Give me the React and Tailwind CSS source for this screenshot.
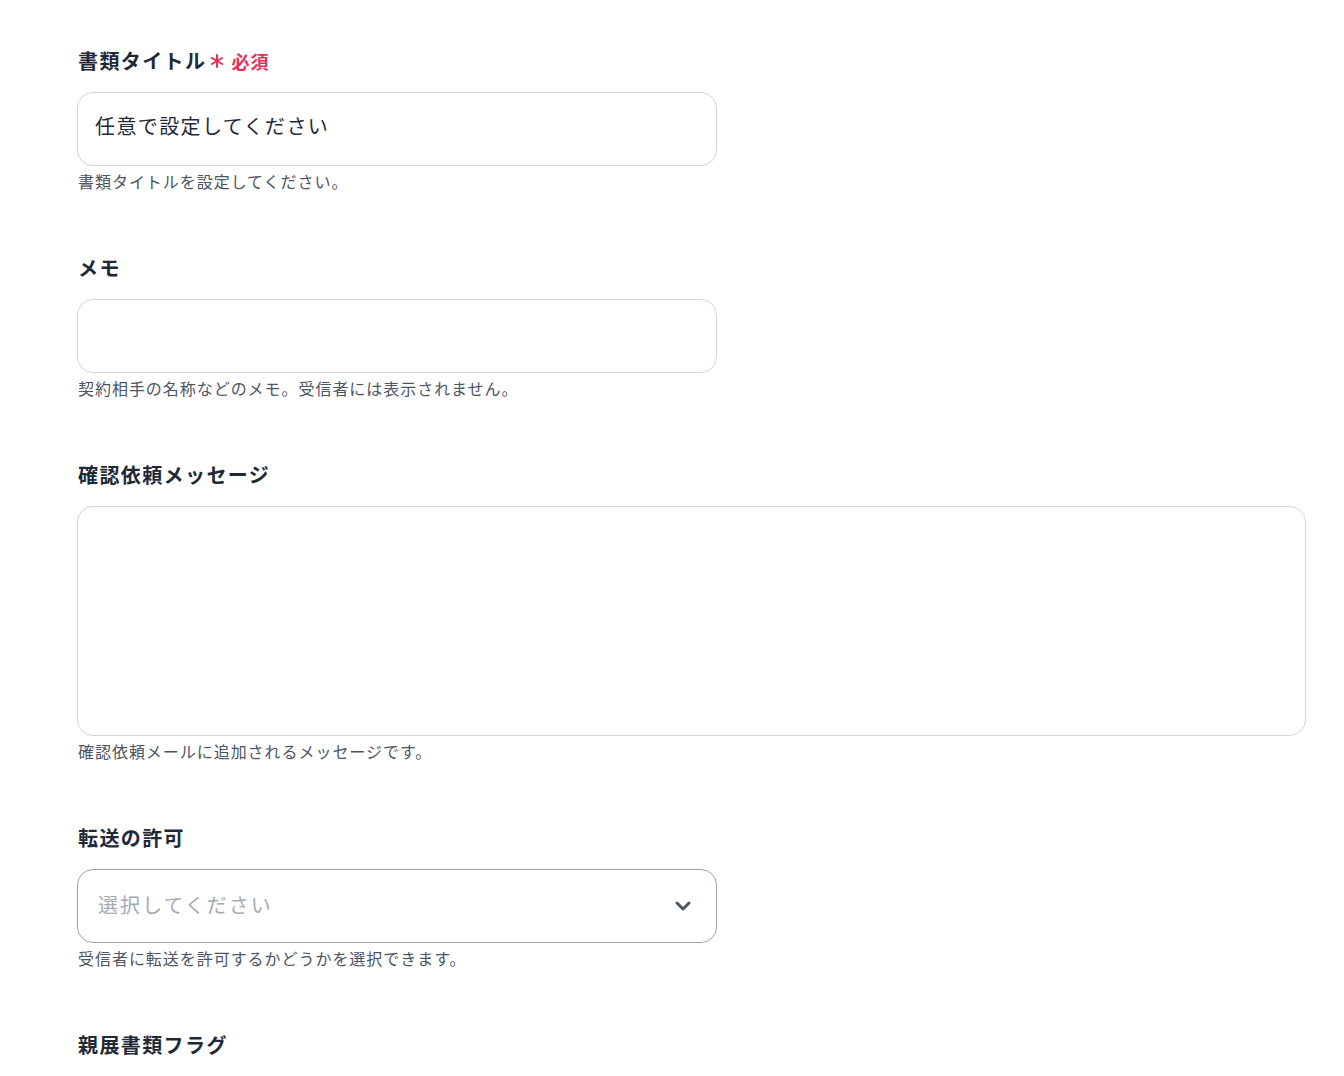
import React from "react";

const font = { fontFamily: '"Noto Sans CJK JP", "Noto Sans", sans-serif' };

function Field({ label, required, help, children }) {
  return (
    <div className="mb-[61px]">
      <label className="flex items-center h-7 mb-[17px] text-xl font-bold tracking-[0.07em] text-[#1f2937]">
        {label}
        {required && (
          <span className="ml-[4px] flex items-center text-lg font-bold tracking-[0.06em] text-[#e8325a]">
            <svg width="14" height="14" viewBox="0 0 14 14" className="mr-[7px]">
              <g stroke="currentColor" strokeWidth="2" strokeLinecap="round">
                <path d="M7 1v12" />
                <path d="M1.8 4l10.4 6" />
                <path d="M1.8 10l10.4-6" />
              </g>
            </svg>
            必須
          </span>
        )}
      </label>
      {children}
      {help && (
        <p className="mt-[3px] text-base leading-6 tracking-[0.06em] text-[#4b5563]">{help}</p>
      )}
    </div>
  );
}

export default function App() {
  return (
    <div className="min-h-screen bg-white pt-[47px] pl-[78px] pr-[38px]" style={font}>
      <Field label="書類タイトル" required help="書類タイトルを設定してください。">
        <input
          defaultValue="任意で設定してください"
          className="w-[640px] h-[74px] -ml-px rounded-2xl border border-[#d1d5db] px-[17px] pb-[7px] text-xl tracking-[0.07em] text-[#1f2937] outline-none"
        />
      </Field>

      <Field label="メモ" help="契約相手の名称などのメモ。受信者には表示されません。">
        <input className="w-[640px] h-[74px] -ml-px rounded-2xl border border-[#d1d5db] px-[17px] text-xl outline-none" />
      </Field>

      <Field label="確認依頼メッセージ" help="確認依頼メールに追加されるメッセージです。">
        <textarea className="block w-[1229px] h-[230px] -ml-px rounded-2xl border border-[#d1d5db] px-[17px] py-3 text-xl outline-none resize-none" />
      </Field>

      <Field label="転送の許可" help="受信者に転送を許可するかどうかを選択できます。">
        <div className="w-[640px] h-[74px] -ml-px rounded-2xl border border-[#9ca3af] flex items-center pl-5 pr-6">
          <span className="flex-1 pb-[2px] text-xl tracking-[0.1em] text-[#a5abb5]">選択してください</span>
          <svg width="18" height="12" viewBox="0 0 18 12" className="text-[#4b5563]">
            <path d="M3 3l6 6 6-6" fill="none" stroke="currentColor" strokeWidth="3" strokeLinecap="round" strokeLinejoin="round" />
          </svg>
        </div>
      </Field>

      <Field label="親展書類フラグ" />
    </div>
  );
}
